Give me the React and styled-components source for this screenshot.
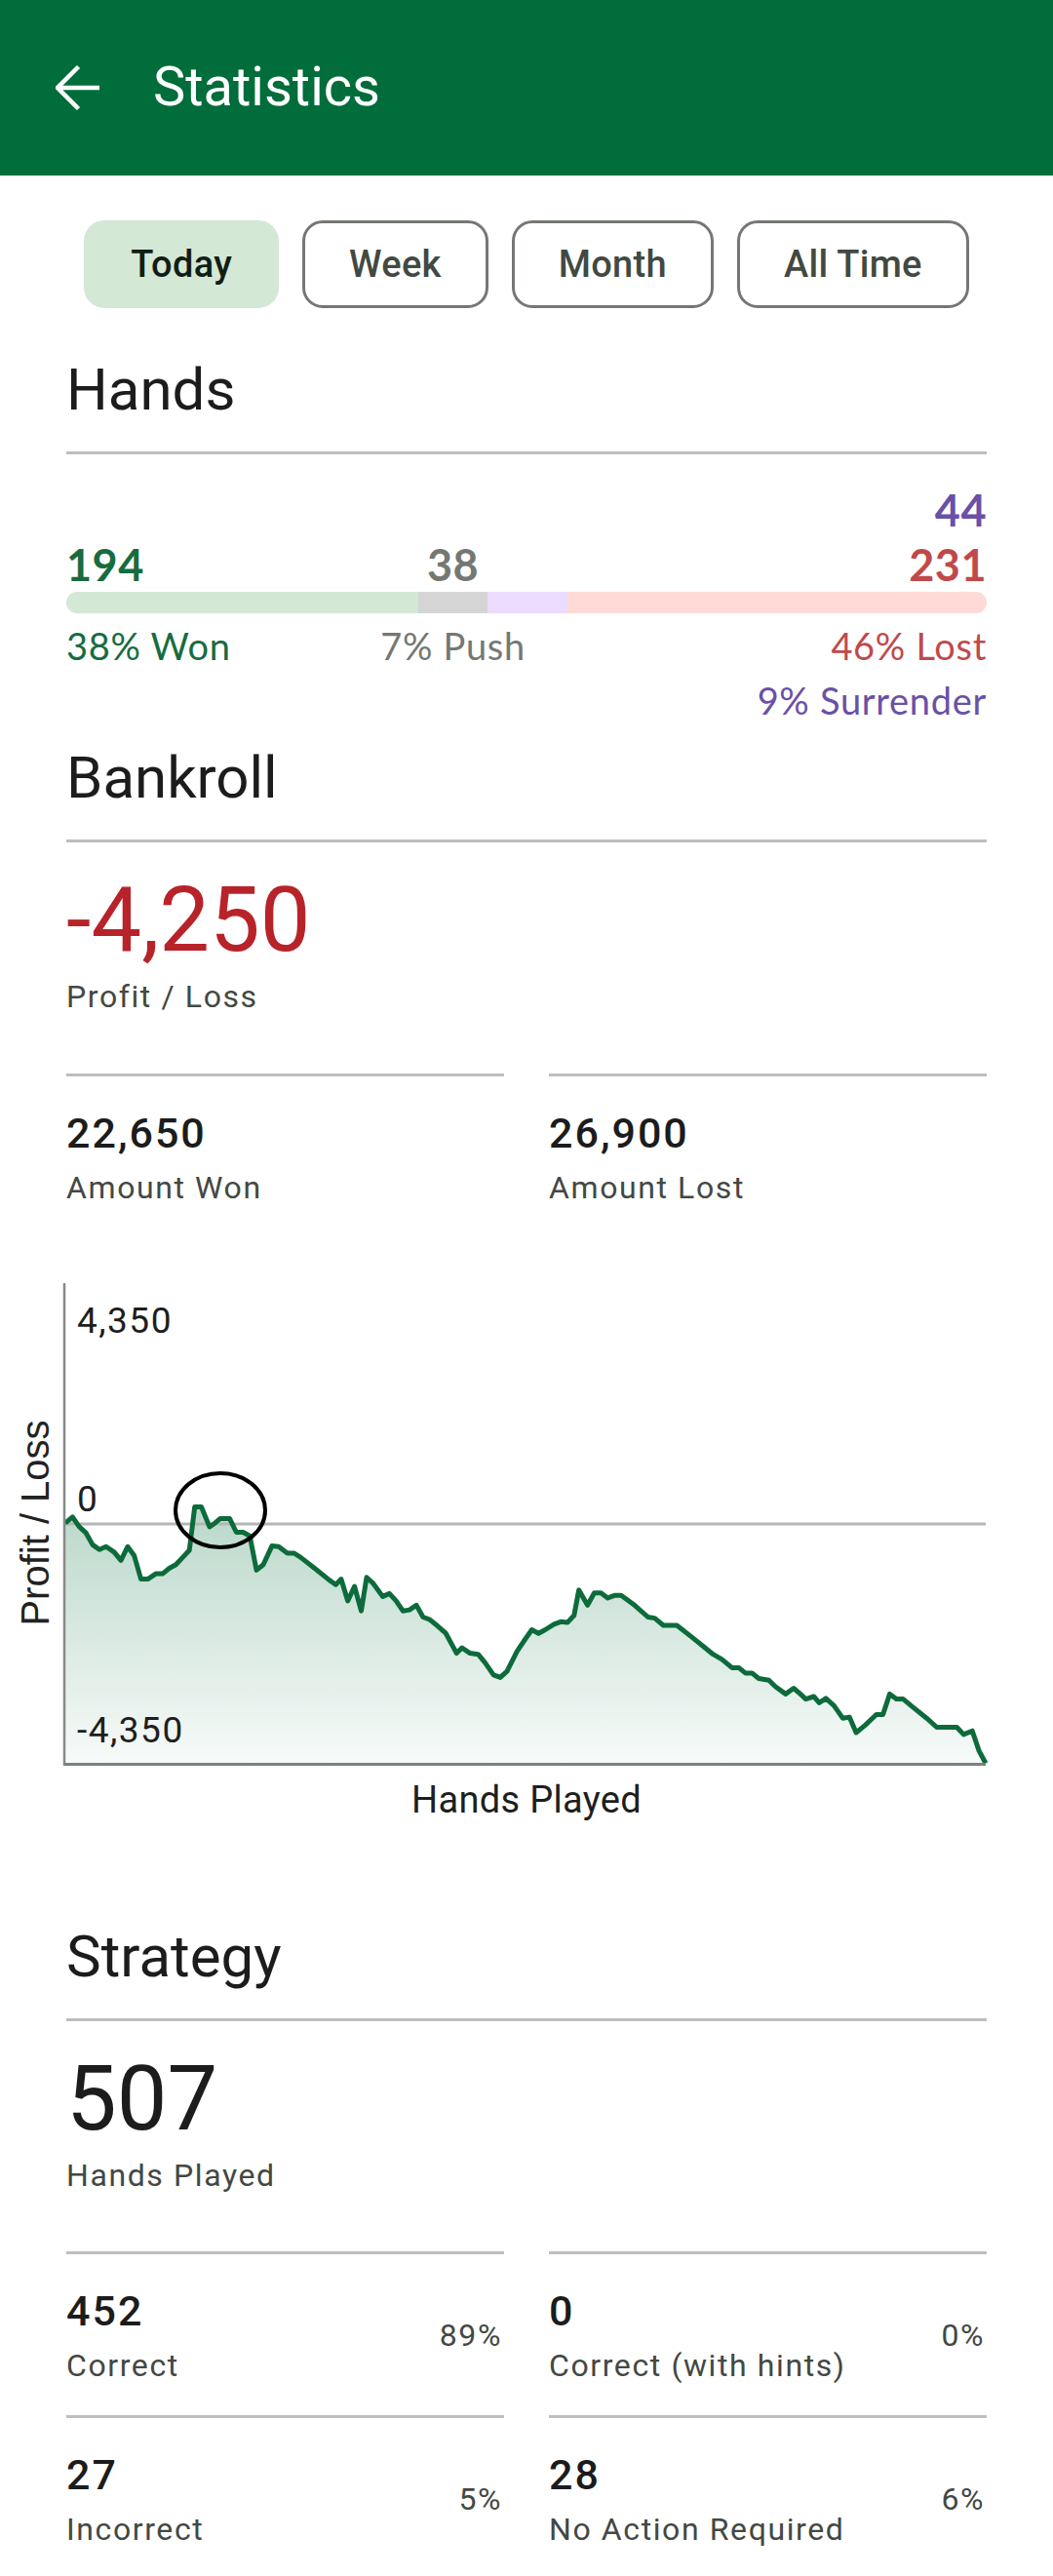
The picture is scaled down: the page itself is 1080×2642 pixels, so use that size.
import React from "react";
import styled, { createGlobalStyle } from "styled-components";

const GlobalStyle = createGlobalStyle`
  html, body {
    margin: 0;
    padding: 0;
    background: #ffffff;
  }
  body {
    font-family: Roboto, "Liberation Sans", sans-serif;
  }
  * {
    box-sizing: border-box;
  }
`;

const Screen = styled.div`
  width: 1080px;
  min-height: 2642px;
  background: #ffffff;
  overflow: hidden;
`;

const AppBar = styled.header`
  height: 180px;
  background: #006d3a;
  display: flex;
  align-items: flex-start;
  padding-left: 57px;
`;

const BackButton = styled.button`
  width: 46px;
  height: 46px;
  margin-top: 67px;
  padding: 0;
  border: 0;
  background: none;
  display: flex;
`;

const Title = styled.h1`
  margin: 56px 0 0 54px;
  font: 400 56px/66px Roboto, sans-serif;
  color: #ffffff;
`;

const Content = styled.main`
  padding: 0 68px;
`;

const FilterRow = styled.div`
  display: flex;
  justify-content: center;
  gap: 24px;
  margin-top: 46px;
`;

const Chip = styled.button`
  height: 90px;
  padding: 0 45px;
  border-radius: 21px;
  border: 3px solid ${(p) => (p.$selected ? "#d3e8d5" : "#747873")};
  background: ${(p) => (p.$selected ? "#d3e8d5" : "transparent")};
  color: ${(p) => (p.$selected ? "#111d14" : "#424940")};
  font: 500 38px/1 Roboto, sans-serif;
  letter-spacing: 0.3px;
`;

const SectionTitle = styled.h2`
  margin: ${(p) => p.$top}px 0 0;
  font: 400 60px/72px Roboto, sans-serif;
  color: #1c1c1c;
`;

const Divider = styled.div`
  height: 3px;
  margin-top: 27px;
  background: #bdbfbc;
`;

const HandsBlock = styled.div`
  margin-top: 29px;
  font-family: Lato, "Open Sans", sans-serif;
`;

const CountRow = styled.div`
  display: flex;
  font-weight: 700;
  font-size: 45px;
  line-height: 56px;
  letter-spacing: 0.5px;
`;

const PctRow = styled.div`
  display: flex;
  font-weight: 400;
  font-size: 38px;
  line-height: 56px;
  letter-spacing: 0.7px;
  margin-top: ${(p) => p.$top || 0}px;
`;

const Slot = styled.div`
  flex: ${(p) => p.$weight} 1 0;
  min-width: 0;
  display: flex;
  justify-content: ${(p) => p.$align};
  white-space: nowrap;
  color: ${(p) => p.$color};
`;

const Bar = styled.div`
  display: flex;
  height: 22px;
  border-radius: 11px;
  overflow: hidden;
`;

const BarPart = styled.div`
  flex: ${(p) => p.$weight} 1 0;
  background: ${(p) => p.$color};
`;

const BigValue = styled.div`
  margin-top: 26px;
  font: 400 92px/108px Roboto, sans-serif;
  color: ${(p) => p.$color || "#1c1c1c"};
`;

const Caption = styled.div`
  margin-top: ${(p) => p.$top ?? 4.5}px;
  font: 400 32px/40px Roboto, sans-serif;
  letter-spacing: 1.6px;
  color: #434843;
  white-space: nowrap;
`;

const StatGrid = styled.div`
  display: grid;
  grid-template-columns: 1fr 1fr;
  column-gap: 46px;
  margin-top: ${(p) => p.$top}px;
`;

const Cell = styled.div`
  border-top: 3px solid #bdbfbc;
  padding: 32px 0 31px;
  display: flex;
  align-items: center;
  justify-content: space-between;
`;

const CellValue = styled.div`
  font: 500 43px/52px Roboto, sans-serif;
  letter-spacing: 2px;
  color: #1c1c1c;
`;

const Percent = styled.div`
  margin-right: 2px;
  font: 400 32px/40px Roboto, sans-serif;
  letter-spacing: 1.6px;
  color: #434843;
`;

const ChartBox = styled.div`
  margin: 1.5px -68px 0;
  svg {
    display: block;
  }
`;

const AxisText = styled.text`
  font-family: Roboto, sans-serif;
  font-size: ${(p) => p.$size || 37}px;
  letter-spacing: ${(p) => p.$spacing ?? 1.5}px;
  fill: #1e1e1e;
`;

const RotatedText = styled.text`
  font-family: "Liberation Sans", Arial, sans-serif;
  font-size: 40px;
  fill: #222222;
`;

const BackArrow = () => (
  <svg width="46" height="46" viewBox="0 0 46 46">
    <path
      d="M45 23H3M23.5 1.5L2 23l21.5 21.5"
      fill="none"
      stroke="#ffffff"
      strokeWidth="4.5"
    />
  </svg>
);

// traced from the reference curve (zoom space), mapped to page coords below
const RAW = [
  [97, 735], [108, 718], [118, 745], [128, 762], [138, 795], [148, 808], [158, 800],
  [170, 815], [180, 838], [190, 800], [200, 825], [210, 890], [220, 890], [232, 875],
  [242, 875], [252, 860], [262, 850], [272, 830], [282, 810], [290, 690], [300, 690],
  [312, 745], [320, 735], [328, 722], [342, 722], [352, 760], [362, 760], [372, 770],
  [382, 865], [392, 850], [405, 798], [415, 800], [428, 818], [438, 818], [448, 830],
  [470, 862], [490, 892], [500, 905], [508, 890], [518, 950], [528, 910], [538, 978],
  [546, 885], [555, 900], [570, 938], [580, 930], [590, 950], [600, 978], [610, 975],
  [620, 962], [630, 995], [640, 1002], [652, 1020], [664, 1040], [680, 1095], [688, 1080],
  [700, 1095], [712, 1098], [722, 1120], [735, 1155], [745, 1162], [755, 1145], [770, 1090],
  [780, 1062], [792, 1030], [802, 1040], [812, 1030], [825, 1015], [835, 1008], [845, 1010],
  [855, 990], [862, 920], [875, 962], [885, 928], [895, 928], [905, 942], [915, 935],
  [925, 935], [945, 962], [965, 995], [975, 998], [988, 1018], [1008, 1018], [1030, 1050],
  [1050, 1080], [1062, 1098], [1075, 1112], [1090, 1135], [1100, 1135], [1110, 1150],
  [1120, 1150], [1130, 1165], [1145, 1170], [1155, 1188], [1170, 1208], [1182, 1192],
  [1192, 1208], [1200, 1222], [1212, 1215], [1220, 1232], [1230, 1220], [1242, 1240],
  [1255, 1275], [1265, 1272], [1275, 1315], [1288, 1295], [1305, 1265], [1315, 1265],
  [1325, 1208], [1335, 1222], [1345, 1222], [1360, 1245], [1380, 1275], [1395, 1300],
  [1425, 1300], [1435, 1320], [1448, 1310], [1458, 1365], [1468, 1400],
];

const POINTS = RAW.map(([x, y]) => [+(x / 1.452).toFixed(1), +(1290 + y / 2.7).toFixed(1)]);
const LINE = POINTS.map(([x, y], i) => `${i ? "L" : "M"}${x} ${y}`).join(" ");
const AREA = `${LINE} L1011 1809 L66 1809 Z`;

const ProfitChart = () => (
  <svg width="1080" height="600" viewBox="0 1270 1080 600">
    <defs>
      <linearGradient id="fill" gradientUnits="userSpaceOnUse" x1="0" y1="1545" x2="0" y2="1810">
        <stop offset="0" stopColor="#006d3a" stopOpacity="0.27" />
        <stop offset="1" stopColor="#006d3a" stopOpacity="0.03" />
      </linearGradient>
    </defs>
    <path d={AREA} fill="url(#fill)" />
    <line x1="66" y1="1563" x2="1011" y2="1563" stroke="#b5b6b5" strokeWidth="3" />
    <path d={LINE} fill="none" stroke="#0d6b3b" strokeWidth="5" strokeLinejoin="round" />
    <line x1="66" y1="1316" x2="66" y2="1810" stroke="#878a87" strokeWidth="2.5" />
    <line x1="65" y1="1809.5" x2="1011" y2="1809.5" stroke="#7d807d" strokeWidth="3" />
    <ellipse cx="226" cy="1549" rx="46" ry="38" fill="none" stroke="#000000" strokeWidth="4" />
    <AxisText x="79" y="1367">4,350</AxisText>
    <AxisText x="79" y="1550">0</AxisText>
    <AxisText x="79" y="1787">-4,350</AxisText>
    <AxisText x="540" y="1859" textAnchor="middle" $size={38} $spacing={0.3}>
      Hands Played
    </AxisText>
    <RotatedText x="50" y="1562" textAnchor="middle" transform="rotate(-90 50 1562)">
      Profit / Loss
    </RotatedText>
  </svg>
);

const hands = [
  { key: "won", count: 194, color: "#176c3f", bar: "#d3e8d5", label: "38% Won", align: "flex-start" },
  { key: "push", count: 38, color: "#747873", bar: "#d5d5d5", label: "7% Push", align: "center" },
  { key: "surrender", count: 44, color: "#6a50a7", bar: "#ecdcff", label: "", align: "center" },
  { key: "lost", count: 231, color: "#c0494a", bar: "#ffdad6", label: "46% Lost", align: "flex-end" },
];

const strategy = [
  { value: "452", label: "Correct", pct: "89%" },
  { value: "0", label: "Correct (with hints)", pct: "0%" },
  { value: "27", label: "Incorrect", pct: "5%" },
  { value: "28", label: "No Action Required", pct: "6%" },
];

const StatCell = ({ value, label, pct }) => (
  <Cell>
    <div>
      <CellValue>{value}</CellValue>
      <Caption $top={10}>{label}</Caption>
    </div>
    {pct && <Percent>{pct}</Percent>}
  </Cell>
);

export default function App() {
  return (
    <Screen>
      <GlobalStyle />
      <AppBar>
        <BackButton aria-label="Back">
          <BackArrow />
        </BackButton>
        <Title>Statistics</Title>
      </AppBar>

      <Content>
        <FilterRow>
          <Chip $selected>Today</Chip>
          <Chip>Week</Chip>
          <Chip>Month</Chip>
          <Chip>All Time</Chip>
        </FilterRow>

        <SectionTitle $top={47.5}>Hands</SectionTitle>
        <Divider />
        <HandsBlock>
          <CountRow>
            <Slot $weight={1} $align="flex-end" $color="#6a50a7">44</Slot>
          </CountRow>
          <CountRow>
            {hands.map((h) => (
              <Slot key={h.key} $weight={h.count} $align={h.align} $color={h.color}>
                {h.key === "surrender" ? "" : h.count}
              </Slot>
            ))}
          </CountRow>
          <Bar>
            {hands.map((h) => (
              <BarPart key={h.key} $weight={h.count} $color={h.bar} />
            ))}
          </Bar>
          <PctRow $top={5}>
            {hands.map((h) => (
              <Slot key={h.key} $weight={h.count} $align={h.align} $color={h.color}>
                {h.label}
              </Slot>
            ))}
          </PctRow>
          <PctRow>
            <Slot $weight={1} $align="flex-end" $color="#6a50a7">9% Surrender</Slot>
          </PctRow>
        </HandsBlock>

        <SectionTitle $top={16}>Bankroll</SectionTitle>
        <Divider />
        <BigValue $color="#b8232a">-4,250</BigValue>
        <Caption>Profit / Loss</Caption>
        <StatGrid $top={58.5}>
          <StatCell value="22,650" label="Amount Won" />
          <StatCell value="26,900" label="Amount Lost" />
        </StatGrid>

        <ChartBox>
          <ProfitChart />
        </ChartBox>

        <SectionTitle $top={100.5}>Strategy</SectionTitle>
        <Divider />
        <BigValue>507</BigValue>
        <Caption>Hands Played</Caption>
        <StatGrid $top={57.5}>
          {strategy.map((s) => (
            <StatCell key={s.label} {...s} />
          ))}
        </StatGrid>
      </Content>
    </Screen>
  );
}
